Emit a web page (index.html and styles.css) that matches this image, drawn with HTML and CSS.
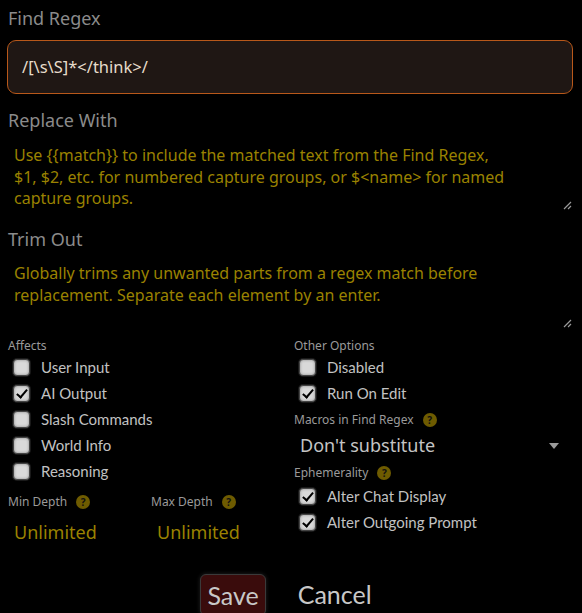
FILE: index.html
```html
<!DOCTYPE html>
<html>
<head>
<meta charset="utf-8">
<link rel="stylesheet" href="styles.css">
</head>
<body>
<div class="page">
  <div class="lbl">Find Regex</div>
  <div class="find">/[\s\S]*&lt;/think&gt;/</div>

  <div class="lbl lbl-gap">Replace With</div>
  <div class="area area-replace">
    <div class="ph">Use {{match}} to include the matched text from the Find Regex, $1, $2, etc. for numbered capture groups, or $&lt;name&gt; for named capture groups.</div>
    <svg class="grip" width="9" height="9" viewBox="0 0 9 9"><path d="M8 1 L1 8 M8 5 L5 8" stroke="#9a9a9a" stroke-width="1.2"/></svg>
  </div>

  <div class="lbl lbl-gap2">Trim Out</div>
  <div class="area area-trim">
    <div class="ph">Globally trims any unwanted parts from a regex match before replacement. Separate each element by an enter.</div>
    <svg class="grip" width="9" height="9" viewBox="0 0 9 9"><path d="M8 1 L1 8 M8 5 L5 8" stroke="#9a9a9a" stroke-width="1.2"/></svg>
  </div>

  <div class="opts">
    <div class="col">
      <div class="small">Affects</div>
      <div class="chk"><span class="box"></span>User Input</div>
      <div class="chk"><span class="box on"></span>AI Output</div>
      <div class="chk"><span class="box"></span>Slash Commands</div>
      <div class="chk"><span class="box"></span>World Info</div>
      <div class="chk"><span class="box"></span>Reasoning</div>
      <div class="depths">
        <div class="depth">
          <div class="small">Min Depth <span class="q">?</span></div>
          <div class="unl">Unlimited</div>
        </div>
        <div class="depth">
          <div class="small">Max Depth <span class="q">?</span></div>
          <div class="unl">Unlimited</div>
        </div>
      </div>
    </div>
    <div class="col col-right">
      <div class="small">Other Options</div>
      <div class="chk"><span class="box"></span>Disabled</div>
      <div class="chk"><span class="box on"></span>Run On Edit</div>
      <div class="small macros">Macros in Find Regex <span class="q">?</span></div>
      <div class="select">Don't substitute<span class="caret"></span></div>
      <div class="small eph">Ephemerality <span class="q">?</span></div>
      <div class="chk"><span class="box on"></span>Alter Chat Display</div>
      <div class="chk"><span class="box on"></span>Alter Outgoing Prompt</div>
    </div>
  </div>

  <div class="buttons">
    <div class="btn save">Save</div>
    <div class="btn cancel">Cancel</div>
  </div>
</div>
</body>
</html>
```

FILE: styles.css
```css
html, body {
  margin: 0;
  padding: 0;
  background: #000;
  overflow: hidden;
}
.page {
  width: 582px;
  height: 613px;
  box-sizing: border-box;
  padding: 5px 9px 0 7px;
  font-family: "Noto Sans", "DejaVu Sans", sans-serif;
}
.lbl {
  color: #8b8b8b;
  font-size: 18px;
  line-height: 26px;
  padding-left: 1px;
}
.lbl-gap { margin-top: 13px; }
.lbl-gap2 { margin-top: 12px; }
.find {
  margin-top: 9px;
  height: 54px;
  box-sizing: border-box;
  border: 1px solid #b8581a;
  border-radius: 9px;
  background: #1f1714;
  color: #e6dccb;
  font-size: 16.5px;
  line-height: 52px;
  padding-left: 14px;
}
.area {
  position: relative;
  height: 80px;
  box-sizing: border-box;
  padding: 11px 7px 0 7px;
}
.area-replace { margin-top: 1px; }
.area-trim { margin-top: 0; }
.ph {
  color: #9a8200;
  font-size: 16px;
  line-height: 21.5px;
  max-width: 500px;
}
.grip {
  position: absolute;
  right: 1px;
  bottom: 4px;
}
.opts {
  display: flex;
  margin-top: 6px;
}
.col {
  width: 286px;
  display: flex;
  flex-direction: column;
}
.small {
  color: #9a9a9a;
  font-size: 12px;
  line-height: 16px;
  padding-left: 1px;
  display: flex;
  align-items: center;
}
.chk {
  display: flex;
  align-items: center;
  height: 26px;
  color: #c2c2c2;
  font-size: 15px;
  font-family: "Lato", "Noto Sans", sans-serif;
  padding-left: 6px;
}
.box {
  width: 15px;
  height: 15px;
  border: 1px solid #444;
  box-shadow: 0 0 0 1px #1a1a1a, inset 0 0 3px #888;
  border-radius: 4px;
  background: #d9d9d9;
  margin-right: 11px;
  position: relative;
}
.box.on::after {
  content: "";
  position: absolute;
  left: 5px;
  top: 1px;
  width: 4px;
  height: 9px;
  border: solid #000;
  border-width: 0 2.5px 2.5px 0;
  transform: rotate(40deg);
}
.q {
  display: inline-flex;
  align-items: center;
  justify-content: center;
  width: 14px;
  height: 14px;
  border-radius: 50%;
  background: #6e5b00;
  color: #111;
  font-size: 10px;
  font-weight: bold;
  margin-left: 9px;
}
.depths {
  display: flex;
  margin-top: 10px;
}
.depth {
  width: 143px;
}
.unl {
  color: #9a8200;
  font-size: 18px;
  line-height: 26px;
  margin-top: 9px;
  padding-left: 7px;
}
.macros { margin-top: 6px; }
.select {
  position: relative;
  color: #c4c4c4;
  font-size: 18px;
  line-height: 28px;
  padding-left: 7px;
  margin-top: 3px;
}
.caret {
  position: absolute;
  right: 14px;
  top: 12px;
  width: 0;
  height: 0;
  border-left: 5px solid transparent;
  border-right: 5px solid transparent;
  border-top: 6px solid #9a9a9a;
}
.eph { margin-top: 6px; margin-bottom: 2px; }
.buttons {
  display: flex;
  justify-content: center;
  gap: 20px;
  margin-top: 29px;
  padding-left: 4px;
}
.btn {
  font-size: 25px;
  line-height: 40px;
  color: #c8c8c8;
  font-family: "Lato", "Noto Sans", sans-serif;
}
.save {
  background: #3a0c0c;
  border: 1px solid #3a3a3a;
  border-radius: 6px;
  padding: 0 6px;
  box-shadow: 0 0 4px #222;
}
.cancel {
  padding: 0 12px;
}
```
